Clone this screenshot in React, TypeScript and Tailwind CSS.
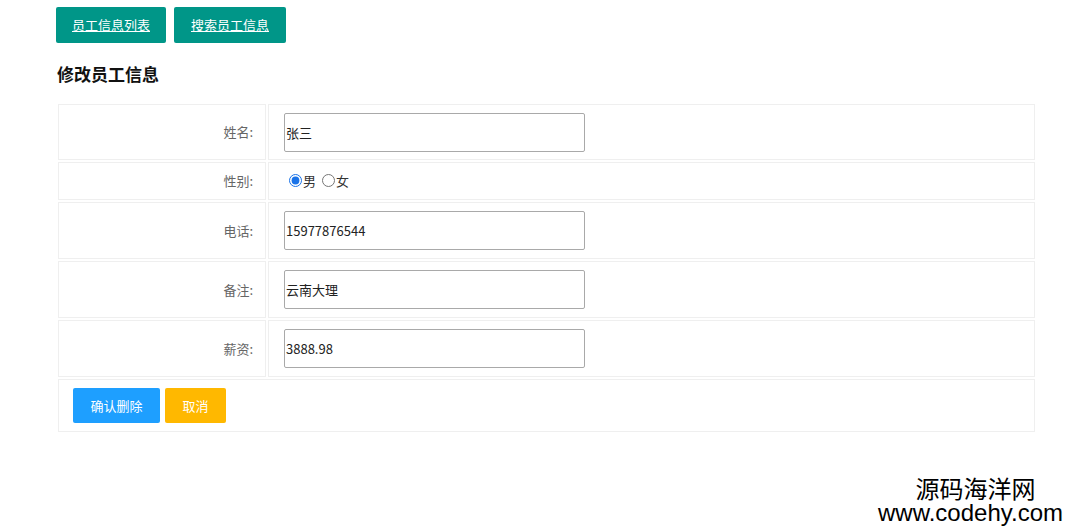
import React from 'react';

const font = { fontFamily: '"Microsoft YaHei", "Noto Sans CJK SC", "Liberation Sans", sans-serif' };

const rows = [
    { label: '姓名:', value: '张三', h: 'h-[56px]' },
    { label: '电话:', value: '15977876544', h: 'h-[57px]' },
    { label: '备注:', value: '云南大理', h: 'h-[57px]' },
    { label: '薪资:', value: '3888.98', h: 'h-[57px]' },
];

const InputCell: React.FC<{ value: string }> = ({ value }) => (
    <td className="border border-[#efefef] pl-[15px]">
        <input
            readOnly
            value={value}
            className="w-[301px] h-[39px] border border-[#a9a9a9] rounded-[2px] px-[1px] text-[13px] text-[#222] outline-none"
        />
    </td>
);

const App: React.FC = () => {
    return (
        <div className="relative w-[1080px] h-[528px] bg-white overflow-hidden" style={font}>
            <div className="flex gap-[8px] pl-[56px] pt-[7px]">
                <button className="w-[110px] h-[36px] bg-[#009688] rounded-[2px] text-white text-[13px] underline">
                    员工信息列表
                </button>
                <button className="w-[112px] h-[36px] bg-[#009688] rounded-[2px] text-white text-[13px] underline">
                    搜索员工信息
                </button>
            </div>
            <h2 className="pl-[57px] mt-[20px] text-[17px] font-bold text-[#111] leading-[22px]">修改员工信息</h2>

            <table className="ml-[56px] mt-[17px] w-[981px] border-separate border-spacing-[2px]">
                <tbody>
                    <tr className={rows[0].h}>
                        <td className="w-[208px] border border-[#efefef] text-right pr-[12px] text-[13px] text-[#666]">{rows[0].label}</td>
                        <InputCell value={rows[0].value} />
                    </tr>
                    <tr className="h-[38px]">
                        <td className="border border-[#efefef] text-right pr-[12px] text-[13px] text-[#666]">性别:</td>
                        <td className="border border-[#efefef] pl-[20px] text-[13px] text-[#333]">
                            <label className="inline-flex items-center gap-[1px]">
                                <input type="radio" name="sex" defaultChecked className="w-[13px] h-[13px] m-0 accent-[#1a73e8]" />
                                男
                            </label>
                            <label className="inline-flex items-center gap-[1px] ml-[6px]">
                                <input type="radio" name="sex" className="w-[13px] h-[13px] m-0" />
                                女
                            </label>
                        </td>
                    </tr>
                    {rows.slice(1).map((r) => (
                        <tr key={r.label} className={r.h}>
                            <td className="border border-[#efefef] text-right pr-[12px] text-[13px] text-[#666]">{r.label}</td>
                            <InputCell value={r.value} />
                        </tr>
                    ))}
                    <tr className="h-[53px]">
                        <td colSpan={2} className="border border-[#efefef] pl-[14px]">
                            <div className="flex gap-[5px]">
                                <button className="w-[87px] h-[35px] bg-[#1E9FFF] rounded-[2px] text-white text-[13px]">确认删除</button>
                                <button className="w-[61px] h-[35px] bg-[#FFB800] rounded-[2px] text-white text-[13px]">取消</button>
                            </div>
                        </td>
                    </tr>
                </tbody>
            </table>

            <div className="absolute right-[17px] bottom-[4px] flex flex-col items-center text-black">
                <span className="text-[24px] leading-[27px] pl-[10px]">源码海洋网</span>
                <span className="text-[24px] leading-[23px]" style={{ fontFamily: '"Liberation Sans", sans-serif' }}>www.codehy.com</span>
            </div>
        </div>
    );
};

export default App;
